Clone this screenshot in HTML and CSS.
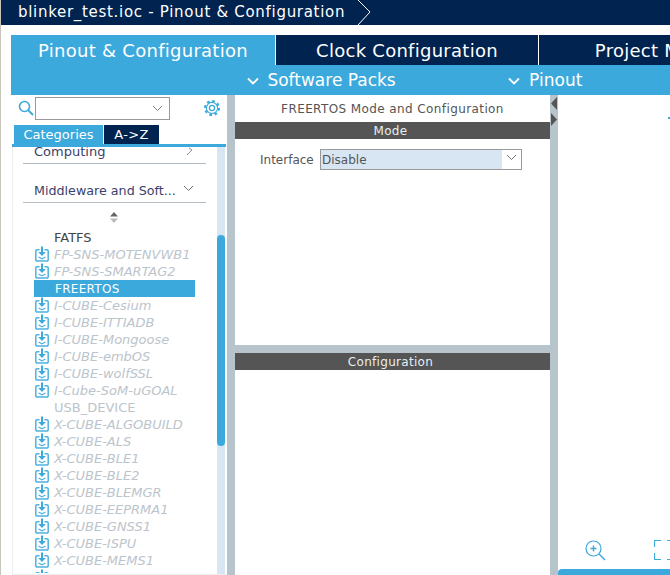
FILE: index.html
```html
<!DOCTYPE html>
<html lang="en">
<head>
    <meta charset="UTF-8">
    <title>blinker_test.ioc - Pinout &amp; Configuration</title>
    <link rel="stylesheet" href="styles.css">
</head>
<body>
<svg class="defs">
    <symbol id="dl" viewBox="0 0 14 16">
        <path d="M4.500 3.800H2a1.200 1.200 0 0 0-1.200 1.200v8.800A1.200 1.200 0 0 0 2 15h10a1.200 1.200 0 0 0 1.200-1.200V5A1.200 1.200 0 0 0 12 3.800H9.500" fill="none" stroke="#4fb2e0" stroke-width="1.500"/>
        <path d="M6 .5h2v5.500h2.800L7 10 3.200 6H6z" fill="#3ba9dc"/>
        <path d="M3.500 11 7 12.800l3.500-1.800" fill="none" stroke="#4fb2e0" stroke-width="1.200"/>
    </symbol>
</svg>
<div class="title-bar">
    <span class="crumb">blinker_test.ioc - Pinout &amp; Configuration</span>
    <svg class="crumb-arrow" width="16" height="25" viewBox="0 0 16 25"><path d="M1 0 13 12 1 25" fill="none" stroke="#fff" stroke-width="1"/></svg>
</div>
<div class="main-tabs">
    <div class="main-tab active">Pinout &amp; Configuration</div>
    <div class="main-tab clock">Clock Configuration</div>
    <div class="main-tab project">Project Manager</div>
</div>
<div class="sub-bar">
    <div class="sub-item packs">
        <svg width="12" height="8" viewBox="0 0 12 8"><path d="M1 1.500 6 6.500 11 1.500" fill="none" stroke="#fff" stroke-width="1.800"/></svg>
        Software Packs
    </div>
    <div class="sub-item pinout">
        <svg width="12" height="8" viewBox="0 0 12 8"><path d="M1 1.500 6 6.500 11 1.500" fill="none" stroke="#fff" stroke-width="1.800"/></svg>
        Pinout
    </div>
</div>
<div class="workspace">
    <div class="left-panel">
        <div class="search-row">
            <svg width="16" height="16" viewBox="0 0 16 16"><circle cx="6.500" cy="6.500" r="5" fill="none" stroke="#3ba9dc" stroke-width="1.600"/><path d="M10 10 15 15" stroke="#3ba9dc" stroke-width="1.800"/></svg>
            <div class="search-box">
                <svg width="11" height="7" viewBox="0 0 11 7"><path d="M1 1 5.500 5.500 10 1" fill="none" stroke="#888" stroke-width="1"/></svg>
            </div>
            <svg class="gear" width="18" height="18" viewBox="0 0 18 18"><circle cx="9" cy="9" r="6.800" fill="none" stroke="#3ba9dc" stroke-width="2.400" stroke-dasharray="2.600 2.740"/><circle cx="9" cy="9" r="5.600" fill="none" stroke="#3ba9dc" stroke-width="1.100"/><circle cx="9" cy="9" r="2.600" fill="none" stroke="#3ba9dc" stroke-width="1.300"/></svg>
        </div>
        <div class="side-tabs">
            <div class="side-tab on">Categories</div>
            <div class="side-tab">A-&gt;Z</div>
        </div>
        <div class="side-line"></div>
        <div class="list-wrap">
            <div class="list">
                <div class="cat computing"><span>Computing</span><svg width="8" height="9" viewBox="0 0 8 9"><path d="M1 8 6 3 3 1" fill="none" stroke="#8a929a" stroke-width="1"/></svg></div>
                <div class="cat middleware"><span>Middleware and Soft...</span><svg width="11" height="7" viewBox="0 0 11 7"><path d="M1 1 5.500 5.500 10 1" fill="none" stroke="#6b7480" stroke-width="1"/></svg></div>
                <div class="sorter"><svg width="8" height="11" viewBox="0 0 8 11"><path d="M4 0 8 4.500H0z" fill="#666"/><path d="M4 11 0 6.500h8z" fill="#bbb"/></svg></div>
                <div class="item plain">FATFS</div>
                <div class="item"><svg class="dl"><use href="#dl"/></svg>FP-SNS-MOTENVWB1</div>
                <div class="item"><svg class="dl"><use href="#dl"/></svg>FP-SNS-SMARTAG2</div>
                <div class="item selected">FREERTOS</div>
                <div class="item"><svg class="dl"><use href="#dl"/></svg>I-CUBE-Cesium</div>
                <div class="item"><svg class="dl"><use href="#dl"/></svg>I-CUBE-ITTIADB</div>
                <div class="item"><svg class="dl"><use href="#dl"/></svg>I-CUBE-Mongoose</div>
                <div class="item"><svg class="dl"><use href="#dl"/></svg>I-CUBE-embOS</div>
                <div class="item"><svg class="dl"><use href="#dl"/></svg>I-CUBE-wolfSSL</div>
                <div class="item"><svg class="dl"><use href="#dl"/></svg>I-Cube-SoM-uGOAL</div>
                <div class="item none">USB_DEVICE</div>
                <div class="item"><svg class="dl"><use href="#dl"/></svg>X-CUBE-ALGOBUILD</div>
                <div class="item"><svg class="dl"><use href="#dl"/></svg>X-CUBE-ALS</div>
                <div class="item"><svg class="dl"><use href="#dl"/></svg>X-CUBE-BLE1</div>
                <div class="item"><svg class="dl"><use href="#dl"/></svg>X-CUBE-BLE2</div>
                <div class="item"><svg class="dl"><use href="#dl"/></svg>X-CUBE-BLEMGR</div>
                <div class="item"><svg class="dl"><use href="#dl"/></svg>X-CUBE-EEPRMA1</div>
                <div class="item"><svg class="dl"><use href="#dl"/></svg>X-CUBE-GNSS1</div>
                <div class="item"><svg class="dl"><use href="#dl"/></svg>X-CUBE-ISPU</div>
                <div class="item"><svg class="dl"><use href="#dl"/></svg>X-CUBE-MEMS1</div>
                <div class="item"><svg class="dl"><use href="#dl"/></svg>X-CUBE-NFC4</div>
            </div>
            <div class="scroll-track"><div class="scroll-thumb"></div></div>
        </div>
    </div>
    <div class="splitter"></div>
    <div class="mid-panel">
        <div class="mid-title">FREERTOS Mode and Configuration</div>
        <div class="band">Mode</div>
        <div class="mode-body">
            <label class="if-label">Interface</label>
            <div class="select">
                <span class="select-text">Disable</span>
                <span class="select-btn"><svg width="11" height="7" viewBox="0 0 11 7"><path d="M1 1 5.500 5.500 10 1" fill="none" stroke="#777" stroke-width="1"/></svg></span>
            </div>
        </div>
        <div class="h-split"></div>
        <div class="band">Configuration</div>
        <div class="conf-body"></div>
    </div>
    <div class="splitter arrows">
        <svg width="8" height="30" viewBox="0 0 8 30"><path d="M7 0 1 6.500 7 13z" fill="#555"/><path d="M1 16 7 22.500 1 29z" fill="#555"/></svg>
    </div>
    <div class="right-panel">
        <div class="canvas"><span class="tick"></span></div>
        <div class="zoom-row">
            <svg width="21" height="21" viewBox="0 0 21 21"><circle cx="8.500" cy="8.500" r="7.500" fill="none" stroke="#3ba9dc" stroke-width="1.200"/><path d="M8.500 5.500v6M5.500 8.500h6" stroke="#3ba9dc" stroke-width="1.400"/><path d="M14 14 20 20" stroke="#3ba9dc" stroke-width="1.400"/></svg>
            <svg width="20" height="20" viewBox="0 0 20 20"><path d="M7 .5H.5V7M.5 13v6.500H7M13 .5h7M13 19.500h7" fill="none" stroke="#3ba9dc" stroke-width="1.200"/></svg>
        </div>
        <div class="right-foot"></div>
    </div>
</div>
</body>
</html>
```

FILE: styles.css
```css
html, body {
    margin: 0;
    height: 575px;
    overflow: hidden;
    background: #fff;
}
body {
    width: 670px;
    border-left: 1px solid #c8c4bc;
    box-sizing: border-box;
    font-family: "DejaVu Sans", sans-serif;
    display: flex;
    flex-direction: column;
}
.defs {
    display: none;
}

/* top bar */
.title-bar {
    height: 25px;
    flex: none;
    background: #012350;
    color: #fff;
    display: flex;
    align-items: center;
    font-size: 15px;
    letter-spacing: 0.7px;
}
.crumb {
    margin: 0 0 2px 17px;
}
.crumb-arrow {
    margin-left: 12px;
}

.main-tabs {
    margin: 10px 0 0 10px;
    height: 30px;
    flex: none;
    display: flex;
    background: #012350;
    color: #fff;
    font-size: 18px;
    letter-spacing: 0.27px;
    line-height: 31px;
    white-space: nowrap;
    overflow: hidden;
}
.main-tab {
    border-right: 1px solid #fff;
    text-align: center;
    flex: none;
}
.main-tab.active {
    width: 264px;
    background: #3ba9dc;
}
.main-tab.clock {
    width: 262px;
}
.main-tab.project {
    width: 262px;
    border: none;
}

.sub-bar {
    margin-left: 10px;
    height: 30px;
    flex: none;
    background: #3ba9dc;
    color: #fff;
    font-size: 17px;
    display: flex;
    align-items: center;
}
.sub-item svg {
    margin-right: 3px;
    vertical-align: 1px;
}
.packs {
    margin-left: 236px;
}
.pinout {
    margin-left: 112px;
}
.pinout svg {
    margin-right: 4px;
}

/* panels */
.workspace {
    flex: 1;
    min-height: 0;
    margin-left: 10px;
    display: flex;
}
.left-panel {
    width: 216px;
    flex: none;
    display: flex;
    flex-direction: column;
}
.search-row {
    height: 30px;
    flex: none;
    display: flex;
    align-items: flex-start;
    padding: 2px 0 0 7px;
    box-sizing: border-box;
}
.search-row > svg:first-child {
    margin: 3px 1px 0 0;
}
.search-box {
    width: 135px;
    height: 23px;
    border: 1px solid #999;
    box-sizing: border-box;
    display: flex;
    align-items: center;
    justify-content: flex-end;
    padding-right: 6px;
}
.gear {
    margin: 2px 0 0 33px;
}
.side-tabs {
    height: 19px;
    flex: none;
    display: flex;
    gap: 1px;
    margin-left: 3px;
    font-size: 13px;
    letter-spacing: 0.3px;
    line-height: 19px;
    color: #fff;
    text-align: center;
}
.side-tab {
    width: 55px;
    background: #012350;
}
.side-tab.on {
    width: 89px;
    background: #3ba9dc;
    letter-spacing: 0;
}
.side-line {
    height: 3px;
    flex: none;
    margin-left: 1px;
    width: 214px;
    background: #3ba9dc;
}
.list-wrap {
    flex: 1;
    min-height: 0;
    display: flex;
    margin-left: 1px;
    border-left: 1px solid #eee;
    border-bottom: 1px solid #eee;
}
.list {
    width: 204px;
    flex: none;
    overflow: hidden;
    height: 426px;
}
.cat {
    margin-left: 10px;
    width: 183px;
    border-bottom: 1px solid #b4bcc4;
    color: #3a3f6b;
    font-size: 13px;
    display: flex;
    justify-content: space-between;
    align-items: center;
    box-sizing: border-box;
    padding: 0 12px 0 11px;
}
.cat.computing {
    height: 17px;
    line-height: 10px;
    align-items: flex-start;
}
.cat.middleware {
    align-items: flex-start;
    line-height: 19px;
    margin-top: 17px;
    height: 22px;
    font-size: 12.7px;
}
.cat.middleware svg {
    margin-top: 4px;
}
.sorter {
    height: 26px;
    text-align: center;
    margin-left: -2px;
    padding-top: 9px;
    box-sizing: border-box;
}
.sorter svg {
    display: block;
    margin: 0 auto;
}
.item {
    height: 17px;
    line-height: 17px;
    padding-left: 41px;
    font-size: 13px;
    font-style: italic;
    color: #bcc4cc;
    position: relative;
    white-space: nowrap;
}
.item.plain {
    font-style: normal;
    color: #444;
    line-height: 18px;
}
.item.none {
    font-style: normal;
    color: #bcc4cc;
    line-height: 18px;
}
.item.selected {
    font-style: normal;
    font-size: 12px;
    letter-spacing: 0.3px;
    color: #fff;
    background: #3ba9dc;
    box-sizing: border-box;
    width: 161px;
    margin-left: 21px;
    padding-left: 21px;
    line-height: 19px;
}
.dl {
    position: absolute;
    left: 22px;
    top: 0;
    width: 14px;
    height: 16px;
}
.scroll-track {
    width: 8px;
    flex: none;
    background: #d8e6f4;
}
.scroll-thumb {
    margin-top: 88px;
    height: 211px;
    background: #3ba9dc;
    border-radius: 4px;
}

.splitter {
    width: 8px;
    flex: none;
    background: #b8c4cc;
}
.arrows svg {
    display: block;
    margin-top: 2px;
}
.mid-panel {
    width: 315px;
    flex: none;
    display: flex;
    flex-direction: column;
}
.mid-title {
    height: 27px;
    line-height: 29px;
    text-align: center;
    font-size: 12px;
    letter-spacing: 0.4px;
    color: #555;
    flex: none;
}
.band {
    height: 17px;
    line-height: 19px;
    flex: none;
    background: #545554;
    color: #e8eef2;
    font-size: 12px;
    letter-spacing: 0.3px;
    text-align: center;
    padding-right: 4px;
}
.mode-body {
    height: 206px;
    flex: none;
    display: flex;
    align-items: flex-start;
    padding: 10px 0 0 25px;
    box-sizing: border-box;
    font-size: 12px;
    color: #555;
}
.if-label {
    line-height: 22px;
    width: 60px;
    flex: none;
}
.select {
    width: 202px;
    height: 21px;
    border: 1px solid #999;
    box-sizing: border-box;
    display: flex;
    background: #fff;
}
.select-text {
    flex: 1;
    background: #d8e6f4;
    line-height: 21px;
    padding-left: 1px;
}
.select-btn {
    width: 19px;
    text-align: center;
}
.h-split {
    height: 8px;
    flex: none;
    background: #b8c4cc;
}
.conf-body {
    flex: 1;
}
.right-panel {
    flex: 1;
    min-width: 0;
    display: flex;
    flex-direction: column;
    overflow: hidden;
}
.canvas {
    flex: 1;
    position: relative;
}
.tick {
    position: absolute;
    right: 0;
    top: 22px;
    width: 2px;
    height: 2px;
    background: #3ba9dc;
}
.zoom-row {
    height: 34px;
    flex: none;
    display: flex;
    gap: 48px;
    align-items: flex-start;
    padding: 5px 0 0 27px;
    box-sizing: border-box;
}
.zoom-row svg {
    flex: none;
}
.right-foot {
    height: 6px;
    flex: none;
    background: #3ba9dc;
    border-radius: 4px 0 0 0;
}
```
